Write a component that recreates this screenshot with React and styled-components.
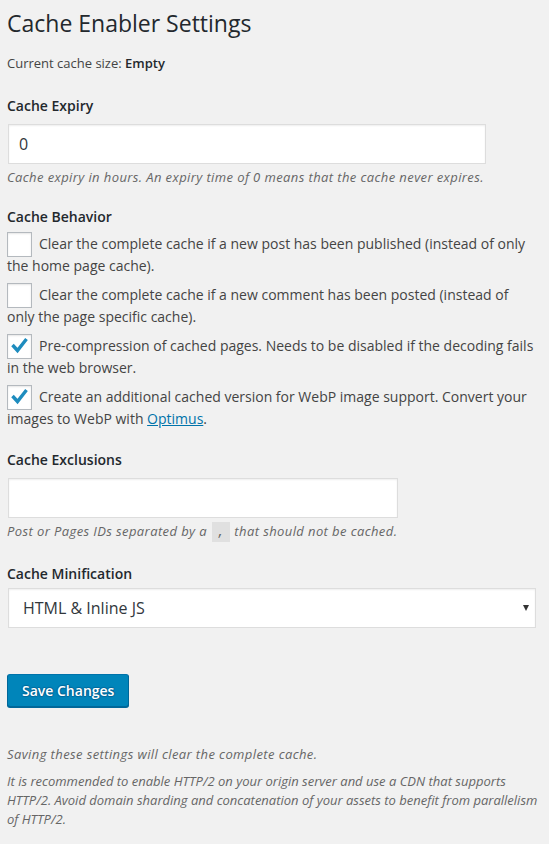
import React from 'react';
import styled, {createGlobalStyle} from 'styled-components';

const GlobalStyle = createGlobalStyle`
  html, body {
    margin: 0;
    padding: 0;
    background: #f1f1f1;
  }
  body {
    font-family: "Open Sans", "Liberation Sans", sans-serif;
    font-size: 13px;
    line-height: 19px;
    color: #444;
  }
`;

const Wrap = styled.div`
  padding: 9px 8px 20px 7px;
`;

const Title = styled.h1`
  margin: 0;
  font-size: 23px;
  line-height: 29px;
  font-weight: 400;
  color: #23282d;
`;

const SizeNote = styled.p`
  margin: 16px 0 0;
  font-size: 13px;
  line-height: 19px;

  strong {
    font-weight: 600;
    color: #23282d;
  }
`;

const FieldLabel = styled.div`
  margin-top: ${({$gap}) => $gap}px;
  font-size: 14px;
  line-height: 19px;
  font-weight: 600;
  color: #23282d;
`;

const TextInput = styled.input`
  display: block;
  box-sizing: border-box;
  width: ${({$width}) => $width}px;
  height: 40px;
  margin: ${({$gap}) => $gap}px 1px 0;
  padding: 6px 10px;
  border: 1px solid #ddd;
  border-radius: 0;
  background: #fff;
  box-shadow: inset 0 1px 2px rgba(0, 0, 0, .07);
  font-family: inherit;
  font-size: 16px;
  color: #32373c;
  outline: none;
`;

// the italic face runs narrower than the reference, so open it up a little
const Description = styled.p`
  margin: 4px 0 0;
  font-size: 13px;
  line-height: 19px;
  font-style: italic;
  letter-spacing: .4px;
  color: #666;

  code {
    padding: 3px 5px 2px;
    margin: 0 1px;
    background: rgba(0, 0, 0, .07);
    font-family: "Liberation Mono", monospace;
    font-size: 13px;
    font-style: normal;
    letter-spacing: 0;
  }
`;

const Fieldset = styled.div`
  margin: 7px 4px 0 0;
`;

const CheckRow = styled.label`
  display: block;
  margin-bottom: 7px;
  font-size: 14px;
  line-height: 22px;
  color: #444;

  &:last-child {
    margin-bottom: 0;
  }

  a {
    color: #0073aa;
    text-decoration: underline;
  }
`;

const CheckBox = styled.span`
  display: inline-block;
  box-sizing: border-box;
  width: 25px;
  height: 25px;
  margin: -1px 7px -2px 0;
  vertical-align: top;
  border: 1px solid #b4b9be;
  background: #fff;
  box-shadow: inset 0 1px 2px rgba(0, 0, 0, .1);

  svg {
    display: block;
  }
`;

const SelectBox = styled.div`
  position: relative;
  margin: 5px 5px 0 1px;
`;

const Select = styled.select`
  display: block;
  box-sizing: border-box;
  width: 100%;
  height: 40px;
  padding: 0 30px 0 14px;
  border: 1px solid #ddd;
  border-radius: 0;
  background: #fff;
  box-shadow: inset 0 1px 2px rgba(0, 0, 0, .07);
  appearance: none;
  font-family: inherit;
  font-size: 16px;
  color: #32373c;
  outline: none;
`;

const Arrow = styled.span`
  position: absolute;
  right: 7px;
  top: 17px;
  width: 0;
  height: 0;
  border-left: 3px solid transparent;
  border-right: 3px solid transparent;
  border-top: 6px solid #333;
  pointer-events: none;
`;

const SaveButton = styled.button`
  display: block;
  margin-top: 46px;
  padding: 6px 14px;
  border: 1px solid;
  border-color: #0073aa #006799 #006799;
  border-radius: 3px;
  background: #0085ba;
  box-shadow: 0 1px 0 #006799;
  text-shadow: 0 -1px 1px #006799, 1px 0 1px #006799, 0 1px 1px #006799, -1px 0 1px #006799;
  font-family: inherit;
  font-size: 14px;
  line-height: 19px;
  font-weight: 600;
  color: #fff;
  cursor: pointer;
`;

const Note = styled.p`
  margin: ${({$gap}) => $gap}px 0 0;
  font-size: 13px;
  line-height: 19px;
  font-style: italic;
  letter-spacing: ${({$spaced}) => ($spaced ? '.4px' : '0')};
  color: #666;
`;

const Check = () => (
    <svg width="23" height="23" viewBox="0 0 23 23">
        <polyline points="4.5,10 9.5,15.5 18.5,4" fill="none" stroke="#1e8cbe" strokeWidth="3.4"/>
    </svg>
);

const behaviors = [
    {checked: false, text: 'Clear the complete cache if a new post has been published (instead of only the home page cache).'},
    {checked: false, text: 'Clear the complete cache if a new comment has been posted (instead of only the page specific cache).'},
    {checked: true, text: 'Pre-compression of cached pages. Needs to be disabled if the decoding fails in the web browser.'},
    {checked: true, text: (
        <>Create an additional cached version for WebP image support. Convert your images to WebP with <a href="#">Optimus</a>.</>
    )},
];

export default function App() {
    return (
        <Wrap>
            <GlobalStyle/>
            <Title>Cache Enabler Settings</Title>
            <SizeNote>Current cache size: <strong>Empty</strong></SizeNote>

            <FieldLabel $gap={23}>Cache Expiry</FieldLabel>
            <TextInput $gap={9} $width={478} defaultValue="0"/>
            <Description>Cache expiry in hours. An expiry time of 0 means that the cache never expires.</Description>

            <FieldLabel $gap={20}>Cache Behavior</FieldLabel>
            <Fieldset>
                {behaviors.map((item, i) => (
                    <CheckRow key={i}>
                        <CheckBox>{item.checked ? <Check/> : null}</CheckBox>{item.text}
                    </CheckRow>
                ))}
            </Fieldset>

            <FieldLabel $gap={20}>Cache Exclusions</FieldLabel>
            <TextInput $gap={9} $width={390}/>
            <Description>Post or Pages IDs separated by a <code>,</code> that should not be cached.</Description>

            <FieldLabel $gap={22}>Cache Minification</FieldLabel>
            <SelectBox>
                <Select defaultValue="js">
                    <option value="off">Disabled</option>
                    <option value="html">HTML</option>
                    <option value="js">HTML &amp; Inline JS</option>
                </Select>
                <Arrow/>
            </SelectBox>

            <SaveButton>Save Changes</SaveButton>

            <Note $gap={38} $spaced>Saving these settings will clear the complete cache.</Note>
            <Note $gap={8}>It is recommended to enable HTTP/2 on your origin server and use a CDN that supports HTTP/2. Avoid domain sharding and concatenation of your assets to benefit from parallelism of HTTP/2.</Note>
        </Wrap>
    );
}
